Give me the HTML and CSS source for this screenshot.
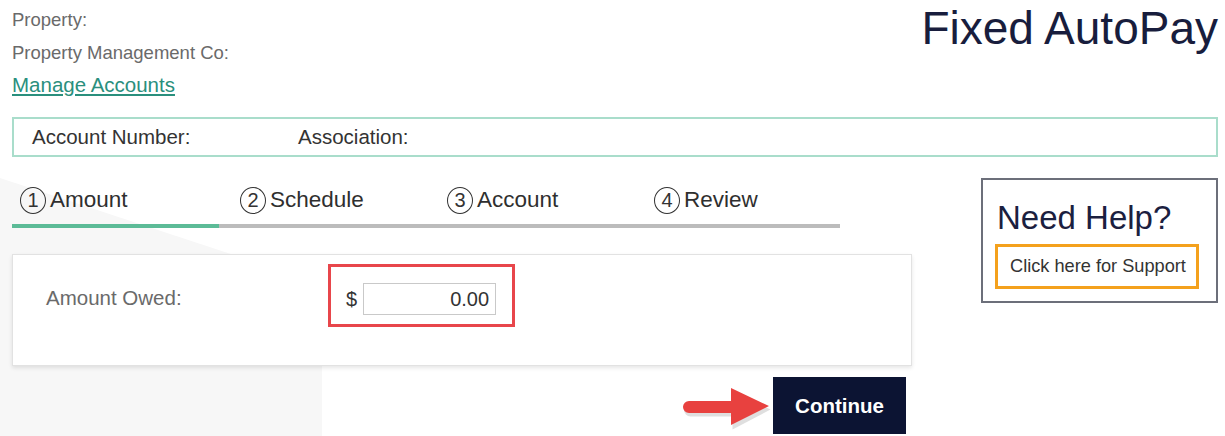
FILE: index.html
```html
<!DOCTYPE html>
<html lang="en">
<head>
<meta charset="utf-8">
<title>Fixed AutoPay</title>
<link rel="stylesheet" href="styles.css">
</head>
<body>
<div class="page">
  <header class="top">
    <div class="meta">
      <div class="meta-line">Property:</div>
      <div class="meta-line">Property Management Co:</div>
      <a class="meta-link" href="#">Manage Accounts</a>
    </div>
    <h1 class="title">Fixed AutoPay</h1>
  </header>

  <div class="account-bar">
    <span class="account-num">Account Number:</span>
    <span class="account-assoc">Association:</span>
  </div>

  <div class="main">
    <div class="flow">
      <div class="steps">
        <div class="step active"><span class="num">1</span>Amount</div>
        <div class="step"><span class="num">2</span>Schedule</div>
        <div class="step"><span class="num">3</span>Account</div>
        <div class="step"><span class="num">4</span>Review</div>
      </div>
      <div class="progress">
        <div class="progress-done"></div>
      </div>

      <div class="card">
        <div class="field-label">Amount Owed:</div>
        <div class="amount-box">
          <span class="currency">$</span>
          <input class="amount-input" type="text" value="0.00">
        </div>
      </div>

      <div class="actions">
        <svg class="pointer" width="96" height="48" viewBox="0 0 96 48" aria-hidden="true">
          <path d="M8 18 L50 18 L50 6 L88 24 L50 44 L50 31 L8 31 A6.5 6.5 0 0 1 8 18 Z" fill="#b9b9b9" opacity="0.45" transform="translate(1.5 2.5)"/>
          <path d="M8 18 L50 18 L50 5 L88 23 L50 42 L50 30 L8 30 A6 6 0 0 1 8 18 Z" fill="#e8413f"/>
        </svg>
        <button class="continue" type="button">Continue</button>
      </div>
    </div>

    <aside class="help">
      <div class="help-title">Need Help?</div>
      <a class="help-btn" href="#">Click here for Support</a>
    </aside>
  </div>
</div>
</body>
</html>
```

FILE: styles.css
```css
html {
  background: #ffffff;
}

body {
  margin: 0;
  position: relative;
  min-height: 436px;
  font-family: "Liberation Sans", Arial, sans-serif;
  color: #333333;
  overflow: hidden;
}

/* soft grey wedge behind the lower-left of the form */
body::before {
  content: "";
  position: absolute;
  left: 0;
  top: 0;
  width: 322px;
  height: 436px;
  background: #f7f7f7;
  clip-path: polygon(0 178px, 322px 284px, 322px 436px, 0 436px);
  z-index: -1;
}

.page {
  padding: 0 7px 0 12px;
}

/* header */
.top {
  display: flex;
  justify-content: space-between;
  align-items: flex-start;
  height: 117px;
}

.meta {
  padding-top: 4px;
  display: flex;
  flex-direction: column;
  align-items: flex-start;
}

.meta-line {
  font-size: 18.5px;
  line-height: 32.5px;
  color: #6a6a6a;
}

.meta-link {
  font-size: 20.5px;
  line-height: 32px;
  color: #2a8f7d;
  text-decoration: underline;
  text-underline-offset: 2px;
}

.title {
  margin: 5px 0 0;
  font-size: 46px;
  line-height: 46px;
  font-weight: normal;
  color: #181d3d;
}

/* account strip */
.account-bar {
  display: flex;
  align-items: center;
  height: 36px;
  border: 2px solid #a9ddcb;
  padding-left: 18px;
  font-size: 20.5px;
  color: #333333;
}

.account-num {
  width: 266px;
}

/* main area */
.main {
  display: flex;
  align-items: flex-start;
  margin-top: 21px;
}

.flow {
  width: 900px;
  display: flex;
  flex-direction: column;
}

.steps {
  display: grid;
  grid-template-columns: repeat(4, 207px);
  padding-top: 8px;
  height: 28px;
  padding-bottom: 10px;
}

.step {
  display: flex;
  align-items: center;
  padding-left: 21px;
  font-size: 22.5px;
  line-height: 28px;
  color: #2f2f2f;
}

.step:first-child {
  padding-left: 8px;
}

.num {
  display: inline-flex;
  align-items: center;
  justify-content: center;
  box-sizing: border-box;
  width: 26px;
  height: 27px;
  border: 1.5px solid #333333;
  border-radius: 50%;
  margin-right: 4px;
  font-size: 20px;
  line-height: 1;
  color: #333333;
}

.progress {
  width: 828px;
  height: 4px;
  background: #bcbcbc;
  display: flex;
}

.progress-done {
  width: 207px;
  background: #5cbb97;
}

/* amount card */
.card {
  margin-top: 26px;
  height: 112px;
  box-sizing: border-box;
  border: 1px solid #e2e2e2;
  background: #ffffff;
  box-shadow: 0 2px 4px rgba(0, 0, 0, 0.10);
  display: flex;
  align-items: flex-start;
  padding: 9px 0 0 33px;
}

.field-label {
  width: 282px;
  margin-top: 21px;
  font-size: 20.5px;
  line-height: 26px;
  color: #6a6a6a;
}

.amount-box {
  display: flex;
  align-items: center;
  border: 3px solid #e8464b;
  padding: 16px 16px 9px 15px;
  gap: 6px;
}

.currency {
  font-size: 20px;
  color: #333333;
}

.amount-input {
  width: 133px;
  height: 32px;
  box-sizing: border-box;
  border: 1px solid #c9c9c9;
  padding: 0 6px;
  text-align: right;
  font-family: "Liberation Sans", Arial, sans-serif;
  font-size: 20px;
  color: #333333;
  background: #ffffff;
  outline: none;
}

/* continue row */
.actions {
  position: relative;
  display: flex;
  justify-content: flex-end;
  margin-top: 11px;
  padding-right: 6px;
}

.pointer {
  position: absolute;
  left: 669px;
  top: 6px;
}

.continue {
  width: 133px;
  height: 57px;
  border: none;
  background: #0c1433;
  color: #ffffff;
  font-family: "Liberation Sans", Arial, sans-serif;
  font-weight: bold;
  font-size: 20.5px;
  cursor: pointer;
}

/* help panel */
.help {
  margin-left: 69px;
  width: 237px;
  height: 125px;
  box-sizing: border-box;
  border: 2px solid #6c6f7a;
  padding: 18px 0 0 12px;
  display: flex;
  flex-direction: column;
  align-items: flex-start;
}

.help-title {
  padding-left: 2px;
  font-size: 33px;
  line-height: 40px;
  color: #1b203f;
}

.help-btn {
  margin-top: 6px;
  width: 204px;
  height: 45px;
  box-sizing: border-box;
  border: 3px solid #f4a11d;
  display: flex;
  align-items: center;
  padding-left: 12px;
  font-size: 18.2px;
  color: #333333;
  text-decoration: none;
}
```
